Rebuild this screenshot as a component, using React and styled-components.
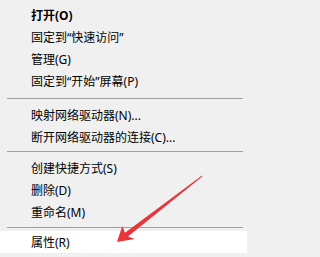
import React from 'react';
import styled, { createGlobalStyle } from 'styled-components';

const GlobalStyle = createGlobalStyle`
  html, body {
    margin: 0;
    padding: 0;
    background: #f0f0f0;
  }
`;

const Menu = styled.div`
  position: relative;
  width: 247px;
  height: 257px;
  box-sizing: border-box;
  padding: 4px 0;
  background: #f0f0f0;
  font-family: "Segoe UI", "Noto Sans", "Noto Sans CJK SC", sans-serif;
  font-size: 12px;
  color: #000;
  overflow: hidden;
`;

const Item = styled.div`
  height: 22px;
  display: flex;
  align-items: center;
  padding-left: 31px;
  white-space: nowrap;
  font-weight: ${p => (p.$bold ? 700 : 400)};
  background: ${p => (p.$active ? '#ffffff' : 'transparent')};
`;

const Separator = styled.div`
  height: 1px;
  margin: ${p => p.$top}px 4px ${p => p.$bottom}px 7px;
  background: #a0a0a0;
`;

const Arrow = styled.svg`
  position: absolute;
  left: 0;
  top: 0;
  pointer-events: none;
`;

const groups = [
  { items: [{ label: '打开(O)', bold: true }, { label: '固定到“快速访问”' }, { label: '管理(G)' }, { label: '固定到“开始”屏幕(P)' }], sep: [6, 5] },
  { items: [{ label: '映射网络驱动器(N)...' }, { label: '断开网络驱动器的连接(C)...' }], sep: [3, 5] },
  { items: [{ label: '创建快捷方式(S)' }, { label: '删除(D)' }, { label: '重命名(M)' }], sep: [4, 3] },
  { items: [{ label: '属性(R)', active: true }] },
];

export default function App() {
  return (
    <>
      <GlobalStyle />
      <Menu>
        {groups.map((g, gi) => (
          <React.Fragment key={gi}>
            {g.items.map(it => (
              <Item key={it.label} $bold={it.bold} $active={it.active}>
                {it.label}
              </Item>
            ))}
            {g.sep && <Separator $top={g.sep[0]} $bottom={g.sep[1]} />}
          </React.Fragment>
        ))}
        <Arrow width="247" height="257" viewBox="0 0 247 257">
          <polygon
            points="117,242 122.2,225.9 125,232.7 202,175.4 202.6,176.2 128,236.6 134.9,238.9"
            fill="#e8353c"
          />
        </Arrow>
      </Menu>
    </>
  );
}
